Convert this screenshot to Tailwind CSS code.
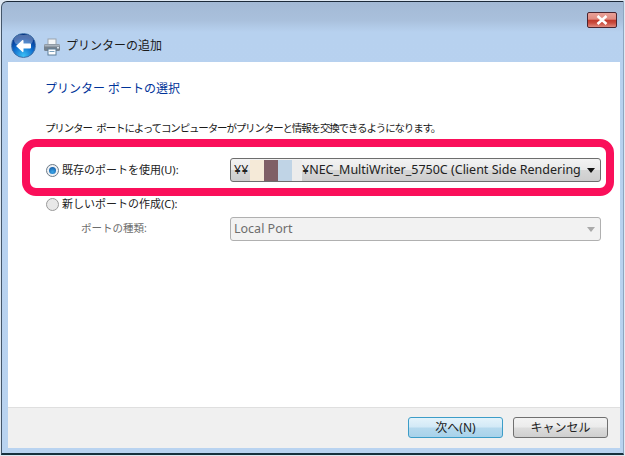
<!DOCTYPE html>
<html lang="ja">

<head>
    <meta charset="UTF-8" />
    <title>プリンターの追加</title>
    <script src="https://cdn.jsdelivr.net/npm/@tailwindcss/browser@4"></script>
</head>

<body class="w-[625px] h-[456px] overflow-hidden bg-white" style="font-family: 'Noto Sans', 'Noto Sans CJK JP', sans-serif;">
    <div class="relative w-[625px] h-[456px] pl-px pt-px bg-[#dfe8f2]">
        <div class="w-[623px] h-[454px] flex flex-col border-t border-l border-r border-b-2 border-t-[#1c2a3a] border-l-[#44566a] border-r-[#8fa6c0] border-b-[#16303c] rounded-tl-md bg-[linear-gradient(to_bottom,#a3b9d5_0px,#a9c0dc_18px,#b7d1ef_30px,#b9d3f0_100%)] pl-[6px] pr-[3px]">
            <!-- title bar -->
            <div class="h-[60px] shrink-0 relative flex items-end pb-[3px]">
                <div class="relative w-[25px] h-[25px] ml-[3px] mb-[1px] rounded-full border border-[#3d6fa8] bg-[radial-gradient(circle_at_50%_95%,#3cc0f5_0%,#0f70d0_42%,#053a96_72%,#0a2f70_100%)] flex items-center justify-center shrink-0 overflow-hidden">
                    <div class="absolute left-[2px] top-[1px] w-[19px] h-[10px] rounded-full bg-white/30"></div>
                    <svg class="relative" width="17" height="14" viewBox="0 0 17 14">
                        <path d="M1 7 L7.5 1 Q8.5 .5 8.5 2 V4.5 H15 Q16 4.5 16 5.5 V8.5 Q16 9.5 15 9.5 H8.5 V12 Q8.5 13.5 7.5 13 Z" fill="#fff" />
                    </svg>
                </div>
                <svg class="ml-[7px] mb-[3px] shrink-0" width="18" height="18" viewBox="0 0 18 18">
                    <rect x="5" y="1" width="8" height="6" fill="#f4f6f8" stroke="#9aa4ae" />
                    <rect x="1" y="6" width="16" height="7" rx="1.5" fill="#76828e" />
                    <rect x="1.5" y="6.5" width="15" height="2" fill="#aab4be" />
                    <rect x="5" y="11" width="8" height="6" fill="#fff" stroke="#5d7f9a" />
                    <rect x="6.5" y="13" width="5" height="1" fill="#7aa0bc" />
                    <rect x="14" y="9" width="2" height="1.5" fill="#d8e4ee" />
                </svg>
                <span class="ml-[5px] mb-[5px] text-[12px] leading-[16px] text-[#1a1a1a]">プリンターの追加</span>
                <div class="absolute right-[3px] top-[10px] w-[30px] h-[16px] rounded-[2px] border border-[#4a2530] bg-[linear-gradient(to_bottom,#e8a198_0%,#e08a80_45%,#c0392b_50%,#c94a3c_70%,#e08a7e_100%)] flex items-center justify-center">
                    <svg width="14" height="10" viewBox="0 0 14 10">
                        <path d="M2.5 1 L11.5 9 M11.5 1 L2.5 9" stroke="#fff" stroke-width="2.6" />
                    </svg>
                </div>
            </div>

            <!-- white content -->
            <div class="h-[345px] shrink-0 bg-white pl-[37px] pr-[19px] relative">
                <h1 class="mt-[18px] text-[12px] leading-[18px] font-normal text-[#003399]">プリンター ポートの選択</h1>
                <p class="mt-[22px] text-[10.5px] tracking-[-1.15px] [word-spacing:3px] leading-[16px] text-[#1a1a1a] whitespace-nowrap">プリンター ポートによってコンピューターがプリンターと情報を交換できるようになります。</p>

                <div class="mt-[22px] flex items-center h-[24px]">
                    <span class="ml-px w-[13px] h-[13px] rounded-full border border-[#6e7b88] bg-[#eef1f4] flex items-center justify-center shrink-0">
                        <span class="w-[7px] h-[7px] rounded-full bg-[radial-gradient(circle_at_50%_70%,#3aa6e8,#0f4f9a)]"></span>
                    </span>
                    <span class="ml-[3px] w-[168px] shrink-0 text-[11px] leading-[16px] text-[#222] whitespace-nowrap">既存のポートを使用(U):</span>
                    <div class="w-[371px] h-[24px] shrink-0 rounded-[3px] border border-[#6d6d6d] bg-[linear-gradient(to_bottom,#f3f3f3_0%,#e9e9e9_48%,#d6d6d6_52%,#cdcdcd_100%)] flex items-center pl-[3px] text-[12.5px] text-[#222] whitespace-nowrap">
                        <span class="w-[16px]">¥¥</span>
                        <span class="w-[14px] h-[21px] bg-[#f5ead8]"></span>
                        <span class="w-[14px] h-[21px] bg-[#7f5f66]"></span>
                        <span class="w-[14px] h-[21px] bg-[#c0d4e6]"></span>
                        <span class="w-[10px] h-[21px] bg-[#ececec]"></span>
                        <span>¥NEC_MultiWriter_5750C (Client Side Rendering</span>
                        <svg class="ml-auto mr-[5px] shrink-0" width="8" height="5" viewBox="0 0 8 5"><path d="M0 0 H8 L4 5 Z" fill="#111" /></svg>
                    </div>
                </div>

                <div class="mt-[14px] flex items-center h-[16px]">
                    <span class="ml-px w-[13px] h-[13px] rounded-full border border-[#9a9a9a] bg-[#e8e8e8] shrink-0"></span>
                    <span class="ml-[3px] text-[11px] leading-[16px] text-[#222] whitespace-nowrap">新しいポートの作成(C):</span>
                </div>

                <div class="mt-[5px] flex items-center h-[24px]">
                    <span class="w-[185px] pl-[36px] shrink-0 text-[10.5px] text-[#6d6d6d] whitespace-nowrap">ポートの種類:</span>
                    <div class="w-[371px] h-[24px] shrink-0 rounded-[3px] border border-[#b0b0b0] bg-[#f2f2f2] flex items-center pl-[3px] text-[12.5px] text-[#6d6d6d]">
                        <span>Local Port</span>
                        <svg class="ml-auto mr-[5px] shrink-0" width="8" height="5" viewBox="0 0 8 5"><path d="M0 0 H8 L4 5 Z" fill="#aaa" /></svg>
                    </div>
                </div>
            </div>

            <!-- footer -->
            <div class="h-[41px] shrink-0 bg-[#f0f0f0] border-t border-[#dfdfdf] flex justify-end items-start pt-[9px] pr-[12px] gap-[10px]">
                <button class="w-[95px] h-[21px] rounded-[3px] border border-[#3c9dc8] bg-[linear-gradient(to_bottom,#e4f3fb_0%,#d2e9f6_48%,#b5d9ee_52%,#a8d2ea_100%)] text-[12px] leading-none text-[#222]">次へ(N)</button>
                <button class="w-[95px] h-[21px] rounded-[3px] border border-[#707070] bg-[linear-gradient(to_bottom,#f3f3f3_0%,#ebebeb_48%,#dcdcdc_52%,#cfcfcf_100%)] text-[12px] leading-none text-[#222]">キャンセル</button>
            </div>
        </div>

        <!-- red marker drawn over the screenshot -->
        <div class="absolute left-[22px] top-[139px] w-[592px] h-[57px] rounded-[14px] border-[8px] border-[#fa0f5a]"></div>
    </div>
</body>

</html>
